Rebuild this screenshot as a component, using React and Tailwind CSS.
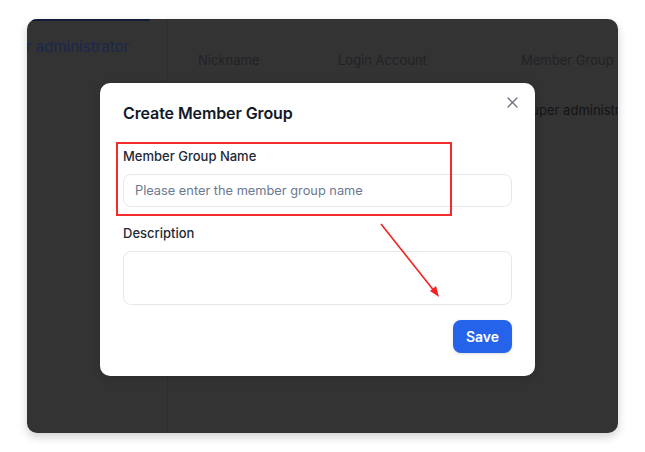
import React from "react";

export default function App() {
  return (
    <div
      className="relative w-[645px] h-[452px] bg-white overflow-hidden pt-[19px] pl-[27px]"
      style={{ fontFamily: "Inter, 'Noto Sans', sans-serif" }}
    >
      <div className="relative w-[591px] h-[414px] rounded-[10px] bg-[#333333] overflow-hidden shadow-[0_4px_10px_rgba(0,0,0,0.18)] flex">
        {/* sidebar */}
        <div className="w-[141px] shrink-0 h-full border-r border-[#2f2f2f] flex flex-col overflow-hidden">
          <div className="h-[2px] w-[123px] bg-[#121c3a] rounded-r-full" />
          <div className="mt-[16px] ml-[-1px] text-[15px] leading-[20px] text-[#1a2750] whitespace-nowrap">
            r administrator
          </div>
        </div>
        {/* main */}
        <div className="flex-1 min-w-0 flex flex-col">
          <div className="flex mt-[32px] text-[13px] leading-[18px] text-[#222226] whitespace-nowrap">
            <div className="ml-[30px] w-[140px] shrink-0">Nickname</div>
            <div className="w-[183px] shrink-0">Login Account</div>
            <div className="shrink-0">Member Group</div>
          </div>
          <div className="flex mt-[32px] text-[13px] leading-[18px] text-[#141416] whitespace-nowrap">
            <div className="ml-[355px] shrink-0">Super administrator</div>
          </div>
        </div>

        {/* modal */}
        <div className="absolute left-[73px] top-[64px] w-[435px] h-[293px] bg-white rounded-[10px] px-[23px] pt-[19px] shadow-[0_2px_8px_rgba(0,0,0,0.15)]">
          <button className="absolute right-[17px] top-[13px] w-[12px] h-[12px] flex items-center justify-center text-[#6b7280]">
            <svg width="11" height="11" viewBox="0 0 11 11" fill="none" stroke="currentColor" strokeWidth="1.3" strokeLinecap="round">
              <path d="M1 1L10 10M10 1L1 10" />
            </svg>
          </button>
          <div className="text-[16px] leading-[22px] font-semibold text-[#111827] tracking-[-0.1px]">
            Create Member Group
          </div>
          <div className="mt-[22px] text-[13px] leading-[20px] font-medium text-[#1f2937]">
            Member Group Name
          </div>
          <div className="mt-[8px] h-[33px] w-full rounded-[8px] border border-[#e5e7eb] flex items-center pl-[11px] text-[12.8px] text-[#6b7890]">
            Please enter the member group name
          </div>
          <div className="mt-[16px] text-[13px] leading-[20px] font-medium text-[#1f2937]">
            Description
          </div>
          <div className="mt-[8px] h-[54px] w-full rounded-[8px] border border-[#e5e7eb]" />
          <div className="mt-[15px] flex justify-end">
            <button className="w-[59px] h-[33px] rounded-[8px] bg-[#2563eb] text-white text-[14px] font-semibold shadow-[0_1px_3px_rgba(0,0,0,0.15)]">
              Save
            </button>
          </div>
          {/* red highlight */}
          <div className="absolute left-[16px] top-[59px] w-[336px] h-[74px] border-2 border-[#f52c2c]" />
        </div>
      </div>

      {/* red arrow */}
      <svg className="absolute left-0 top-0" width="645" height="452" viewBox="0 0 645 452">
        <line x1="381" y1="224" x2="435" y2="292" stroke="#f52020" strokeWidth="1.6" />
        <path d="M439 297 L430 291 L436 286 Z" fill="#f52020" />
      </svg>
    </div>
  );
}
